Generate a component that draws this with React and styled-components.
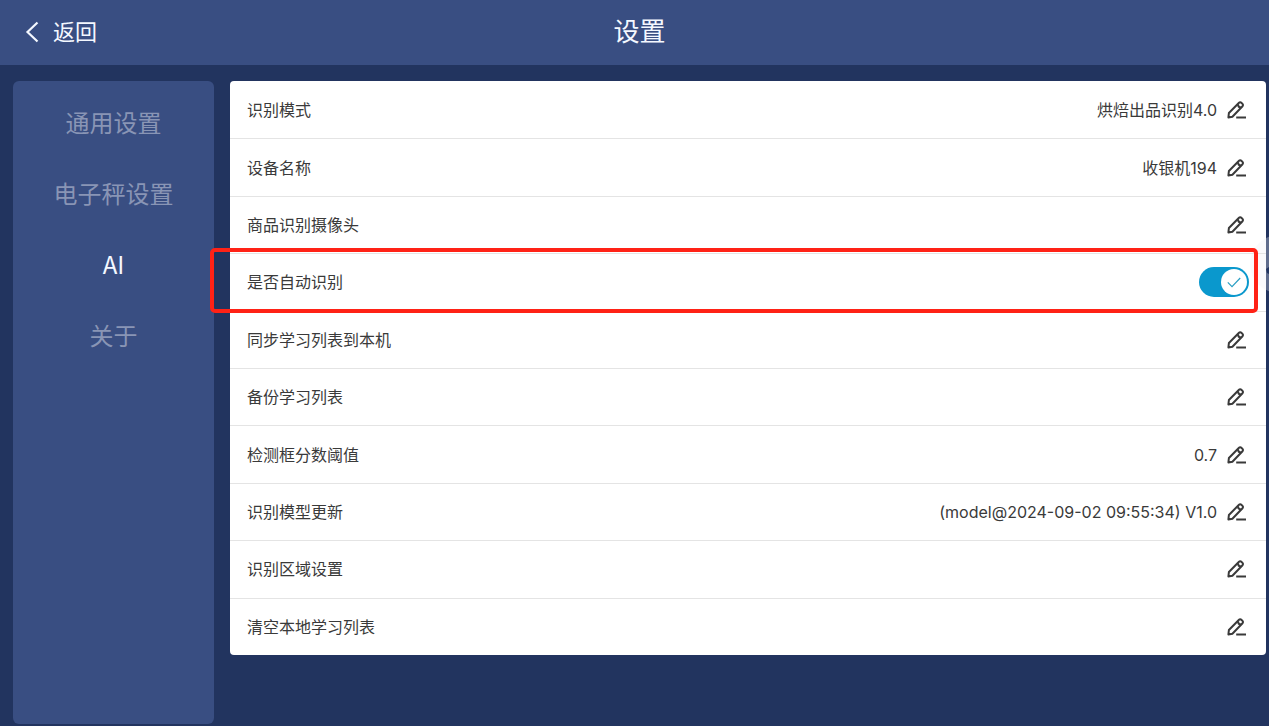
import React, { useState } from 'react';
import styled, { createGlobalStyle } from 'styled-components';

const GlobalStyle = createGlobalStyle`
	* {
		box-sizing: border-box;
	}
	body {
		margin: 0;
		background: #22345f;
		font-family: Inter, 'Noto Sans CJK SC', sans-serif;
		overflow-x: hidden;
	}
	button {
		padding: 0;
		border: 0;
		background: none;
		font-family: inherit;
		cursor: pointer;
	}
`;

const Page = styled.div`
	display: flex;
	flex-direction: column;
	min-height: 100vh;
`;

// top bar
const Header = styled.header`
	display: grid;
	grid-template-columns: 1fr auto 1fr;
	align-items: center;
	height: 65px;
	padding: 0 14px 2px 24px;
	background: #394e82;
	color: #f4f8ff;
`;

const BackButton = styled.button`
	display: flex;
	align-items: center;
	justify-self: start;
	gap: 12px;
	color: inherit;
	font-size: 22px;
	line-height: 32px;
`;

const Title = styled.h1`
	margin: 0;
	font-size: 26px;
	font-weight: 400;
	line-height: 40px;
`;

const Body = styled.div`
	display: flex;
	flex: 1;
	align-items: stretch;
	gap: 16px;
	padding: 16px 3px 2px 13px;
`;

// left menu
const Sidebar = styled.nav`
	display: flex;
	flex-direction: column;
	flex: 0 0 201px;
	padding-top: 5px;
	border-radius: 6px;
	background: #394e82;
	font-family: 'Noto Sans CJK SC', sans-serif;
`;

const MenuItem = styled.button`
	height: 71px;
	color: ${({ $active }) => ($active ? '#f4f8ff' : '#8995b5')};
	font-size: 24px;
`;

// settings
const List = styled.ul`
	display: flex;
	flex: 1;
	flex-direction: column;
	align-self: flex-start;
	min-height: 574px;
	margin: 0;
	padding: 0;
	border-radius: 4px;
	background: #fff;
	list-style: none;
`;

const Row = styled.li`
	position: relative;
	display: flex;
	flex: 1 1 57px;
	align-items: center;
	justify-content: space-between;
	padding: 0 17px;
	color: #3a3a3a;
	font-size: 16px;
	line-height: 24px;
	& + & {
		border-top: 1px solid #e4e4e4;
	}
`;

const Side = styled.div`
	display: flex;
	align-items: center;
	gap: 10px;
`;

const EditButton = styled.button`
	display: flex;
	padding-right: 3px;
	color: #3a3a3a;
`;

const Highlight = styled.div`
	position: absolute;
	inset: -6px 8px -2px -20px;
	z-index: 1;
	border: 4px solid #ff2216;
	border-radius: 5px;
	pointer-events: none;
`;

// switch
const Switch = styled.label`
	position: relative;
	display: flex;
	align-items: center;
	justify-content: ${({ $on }) => ($on ? 'flex-end' : 'flex-start')};
	width: 50px;
	height: 30px;
	padding: 2px;
	border-radius: 15px;
	background: ${({ $on }) => ($on ? '#0a98cd' : '#c4c8d0')};
	cursor: pointer;
	input {
		position: absolute;
		inset: 0;
		margin: 0;
		opacity: 0;
	}
`;

const Knob = styled.span`
	display: flex;
	align-items: center;
	justify-content: center;
	width: 26px;
	height: 26px;
	border-radius: 50%;
	background: #fff;
`;

// floating handle on the screen edge
const FloatHandle = styled.div`
	position: absolute;
	top: 235px;
	right: 0;
	width: 19px;
	height: 58px;
	overflow: hidden;
	pointer-events: none;
	svg {
		display: block;
	}
`;

const BackIcon = () => (
	<svg width="17" height="24" viewBox="0 0 17 24" fill="none" stroke="currentColor" strokeWidth="2.2">
		<path d="M13.5 2.5 3.5 12l10 9.5" />
	</svg>
);

const PencilIcon = () => (
	<svg width="19" height="20" viewBox="0 0 19 20" fill="none" stroke="currentColor" strokeWidth="2" strokeLinejoin="round">
		<path d="M1.4 17.4l.5-4.4L12 2.7a1.6 1.6 0 0 1 2.3 0l1.2 1.2a1.6 1.6 0 0 1 0 2.3L5.4 16.7z" />
		<path d="M11 4.2c0 2 1 3.2 3 3.2M9.2 17.6H19" />
	</svg>
);

const CheckIcon = () => (
	<svg width="14" height="11" viewBox="0 0 14 11" fill="none" stroke="#2a9fc4" strokeWidth="1.2">
		<path d="M.8 5.4l4.2 4.2L13.2 1" />
	</svg>
);

const menu = ['通用设置', '电子秤设置', 'AI', '关于'];

const settings = [
	{ label: '识别模式', value: '烘焙出品识别4.0' },
	{ label: '设备名称', value: '收银机194' },
	{ label: '商品识别摄像头' },
	{ label: '是否自动识别', toggle: true },
	{ label: '同步学习列表到本机' },
	{ label: '备份学习列表' },
	{ label: '检测框分数阈值', value: '0.7' },
	{ label: '识别模型更新', value: '(model@2024-09-02 09:55:34) V1.0' },
	{ label: '识别区域设置' },
	{ label: '清空本地学习列表' },
];

const App = () => {
	const [active, setActive] = useState('AI');
	const [auto, setAuto] = useState(true);

	return (
		<Page>
			<GlobalStyle />
			<FloatHandle>
				<svg width="58" height="58" viewBox="0 0 58 58">
					<circle cx="29" cy="29" r="29" fill="#eeeef4" fillOpacity="0.3" />
					<path d="M16 34l3-2v7l-2-1z" fill="#22345f" />
				</svg>
			</FloatHandle>
			<Header>
				<BackButton>
					<BackIcon />
					返回
				</BackButton>
				<Title>设置</Title>
			</Header>
			<Body>
				<Sidebar>
					{menu.map((name) => (
						<MenuItem key={name} $active={name === active} onClick={() => setActive(name)}>
							{name}
						</MenuItem>
					))}
				</Sidebar>
				<List>
					{settings.map(({ label, value, toggle }) => (
						<Row key={label}>
							{toggle ? <label htmlFor="auto">{label}</label> : <span>{label}</span>}
							{toggle ? (
								<Switch $on={auto}>
									<input id="auto" type="checkbox" checked={auto} onChange={() => setAuto(!auto)} />
									<Knob>{auto && <CheckIcon />}</Knob>
								</Switch>
							) : (
								<Side>
									{value && <span>{value}</span>}
									<EditButton aria-label={label}>
										<PencilIcon />
									</EditButton>
								</Side>
							)}
							{toggle && <Highlight />}
						</Row>
					))}
				</List>
			</Body>
		</Page>
	);
};

export default App;
